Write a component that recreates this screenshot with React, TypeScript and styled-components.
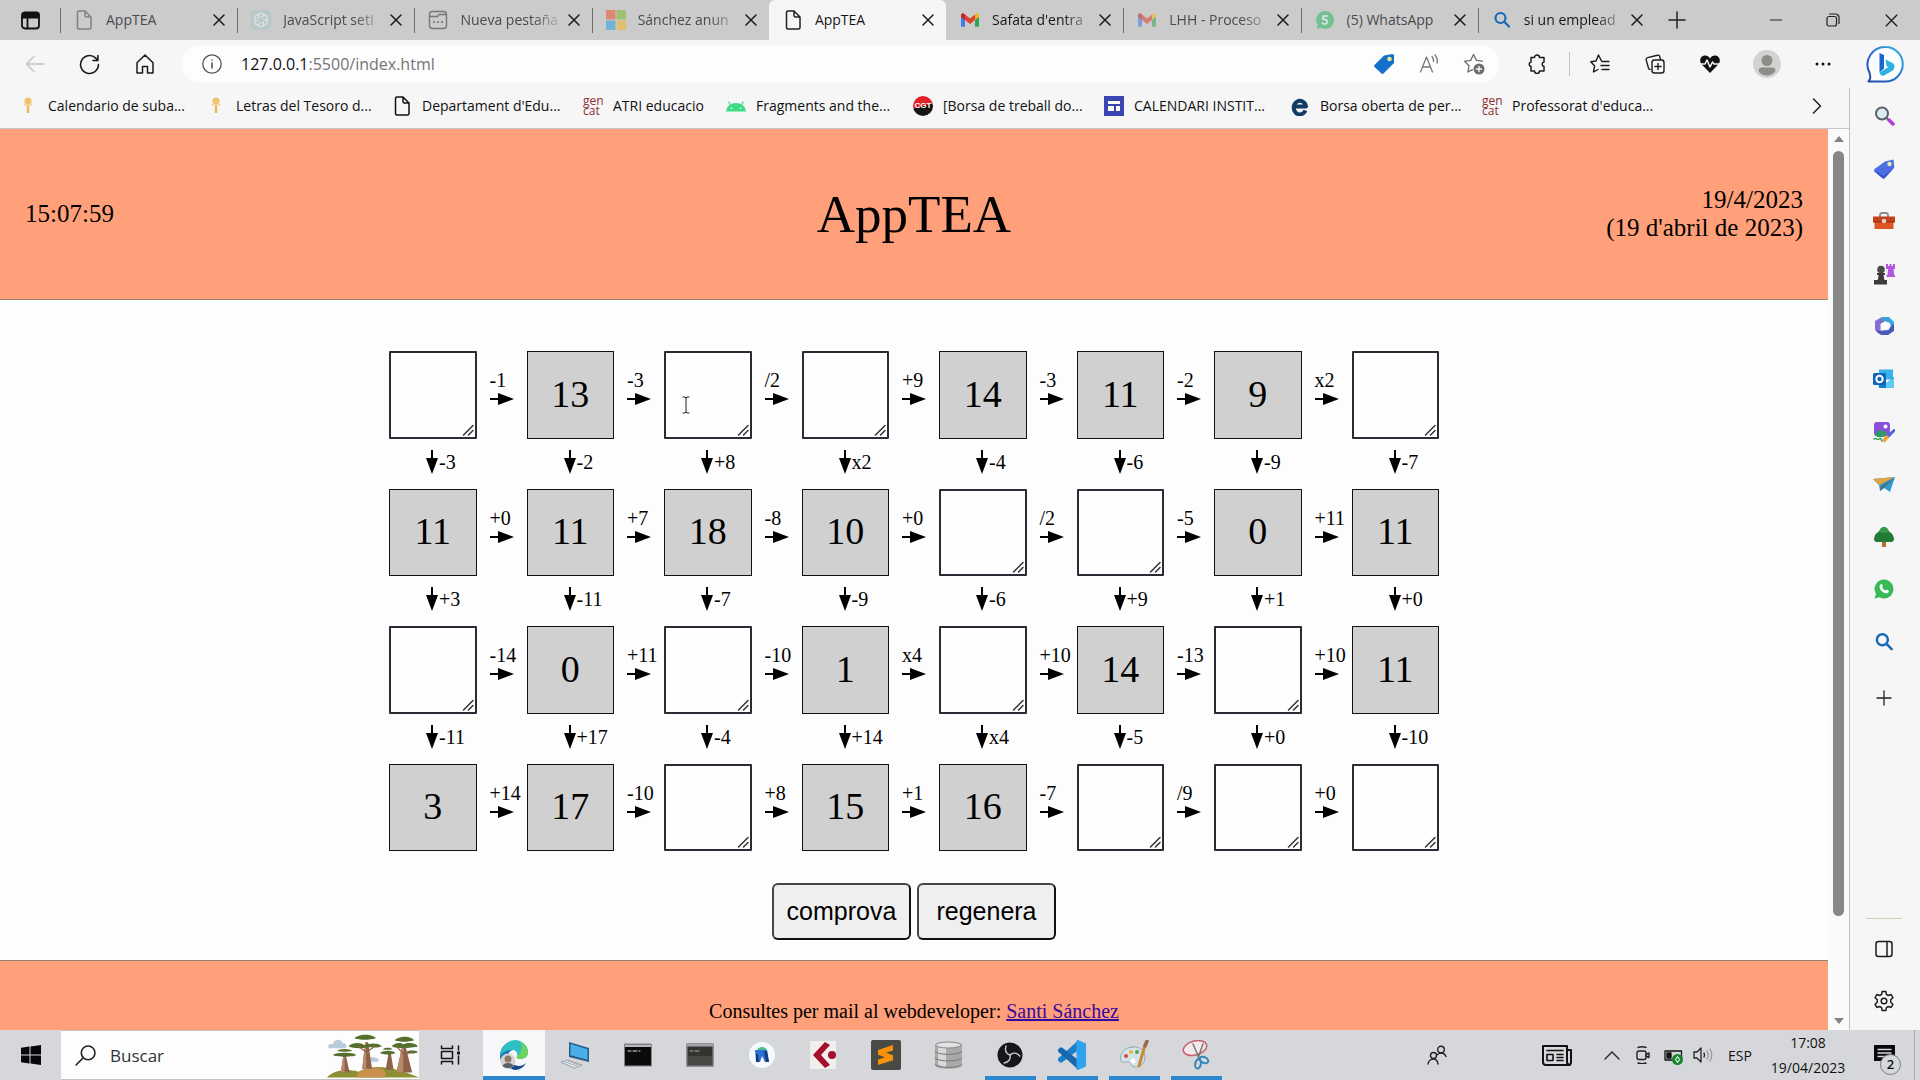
import React from "react";
import styled, { createGlobalStyle, css } from "styled-components";

const ui = `"Open Sans", "Noto Sans", sans-serif`;
const serif = `"Liberation Serif", "Times New Roman", serif`;
const arial = `"Liberation Sans", Arial, sans-serif`;

const chrome = "#f6f6f7";

const GlobalStyle = createGlobalStyle`
  *, *::before, *::after { box-sizing: border-box; }
  body { margin: 0; background: ${chrome}; color: #111; font-family: ${ui}; overflow: hidden; }
  button { font: inherit; color: inherit; }
`;

/* ---------- shared ---------- */

const Icon = styled.svg<{ $w?: number; $h?: number }>`
  display: block;
  flex: none;
  width: ${(p) => p.$w ?? 20}px;
  height: ${(p) => p.$h ?? p.$w ?? 20}px;
  fill: none;
  stroke-linecap: round;
  stroke-linejoin: round;
`;

const Plain = styled.button<{ $w?: number }>`
  display: flex;
  align-items: center;
  justify-content: center;
  flex: none;
  width: ${(p) => (p.$w ? `${p.$w}px` : "auto")};
  padding: 0;
  border: 0;
  background: none;
`;

const Window = styled.div`
  display: flex;
  flex-direction: column;
  height: 100vh;
`;

/* ---------- tab strip ---------- */

const TabStrip = styled.header`
  display: flex;
  flex: none;
  height: 40px;
  background: #cbcbcc;
`;

const TabList = styled.div`
  display: flex;
  flex: 0 1 1595px;
  min-width: 0;
`;

const Tab = styled.div<{ $active?: boolean; $edge?: boolean }>`
  display: flex;
  align-items: center;
  flex: 1 1 0;
  min-width: 0;
  padding: 0 8px 0 14px;
  ${(p) =>
    p.$active &&
    css`
      background: ${chrome};
      border-radius: 6px 6px 0 0;
    `}
  &::before {
    content: "";
    align-self: center;
    width: 1px;
    height: 25px;
    margin-left: -14px;
    margin-right: 13px;
    background: ${(p) => (p.$active || p.$edge ? "transparent" : "#6d6d70")};
  }
`;

const TabTitle = styled.button<{ $dim?: boolean; $fade?: boolean }>`
  flex: 1;
  min-width: 0;
  margin-left: 12px;
  padding: 0;
  border: 0;
  background: none;
  overflow: hidden;
  white-space: nowrap;
  text-align: left;
  font-size: 14px;
  line-height: 20px;
  color: ${(p) => (p.$dim ? "#4a4a4c" : "#161616")};
  ${(p) =>
    p.$fade &&
    css`
      mask-image: linear-gradient(to right, #000 calc(100% - 32px), transparent);
    `}
`;

const Faded = styled.span<{ $dim?: boolean }>`
  display: flex;
  justify-content: center;
  width: 20px;
  flex: none;
  opacity: ${(p) => (p.$dim ? 0.55 : 1)};
`;

const WindowButtons = styled.div`
  display: flex;
  margin-left: auto;
`;

/* ---------- toolbar ---------- */

const Body = styled.div`
  display: flex;
  flex: 1;
  min-height: 0;
`;

const Main = styled.div`
  display: flex;
  flex-direction: column;
  flex: 1;
  min-width: 0;
`;

const Toolbar = styled.div`
  display: flex;
  align-items: center;
  flex: none;
  height: 48px;
  padding-left: 7px;
`;

const AddressBar = styled.form`
  display: flex;
  align-items: center;
  flex: 1;
  min-width: 0;
  height: 38px;
  margin: 0 8px 0 10px;
  padding: 0 3px 0 20px;
  border-radius: 19px;
  background: #fdfdfe;
`;

const Url = styled.div`
  flex: 1;
  margin-left: 19px;
  display: flex;
  font-size: 16px;
  color: #737376;
`;

const Host = styled.label`
  color: #111;
`;

const UrlInput = styled.input`
  flex: 1;
  min-width: 0;
  padding: 0;
  border: 0;
  outline: 0;
  background: none;
  font: inherit;
  color: inherit;
`;

const Split = styled.span`
  width: 1px;
  height: 24px;
  margin: 0 2px;
  background: #c3c3c6;
`;

const Bookmarks = styled.nav`
  display: flex;
  align-items: center;
  flex: none;
  height: 41px;
  padding: 0 0 5px 18px;
  border-bottom: 1px solid #c4c4cc;
`;

const Bookmark = styled.a<{ $w: number }>`
  display: flex;
  align-items: center;
  gap: 10px;
  flex: 0 1 ${(p) => p.$w}px;
  min-width: 0;
  white-space: nowrap;
  font-size: 14px;
  line-height: 20px;
  color: #111;
  text-decoration: none;
`;

const MoreBookmarks = styled(Plain)`
  width: 64px;
  margin-left: auto;
`;

const Gencat = styled.span`
  flex: none;
  width: 20px;
  font-size: 12px;
  line-height: 10px;
  color: #8c2f2f;
  white-space: normal;
`;

const Cgt = styled.span`
  display: flex;
  align-items: center;
  justify-content: center;
  flex: none;
  width: 20px;
  height: 20px;
  border-radius: 50%;
  background: linear-gradient(165deg, #e2202a 50%, #161616 50%);
  color: #fff;
  font: bold 8px ${arial};
`;

/* ---------- web page ---------- */

const Viewport = styled.div`
  display: flex;
  flex: 1;
  min-height: 0;
  background: #fdfdfe;
`;

const Page = styled.div`
  flex: 1;
  min-width: 0;
  overflow: hidden;
  font-family: ${serif};
  color: #000;
`;

const PageHeader = styled.header`
  display: grid;
  grid-template-columns: 1fr auto 1fr;
  align-items: center;
  height: 171px;
  padding: 0 25px;
  background: #ffa07a;
  border-bottom: 1px solid #8f8378;
  font-size: 25px;
  line-height: 28px;
`;

const Title = styled.h1`
  margin: 0;
  font-size: 53px;
  line-height: 60px;
  font-weight: 400;
`;

const DateBlock = styled.div`
  text-align: right;
`;

const Game = styled.main`
  padding: 51px 0 20px;
`;

const Board = styled.div`
  display: grid;
  grid-template-columns: repeat(7, minmax(0, 1fr) 50px) minmax(0, 1fr);
  grid-template-rows: repeat(3, minmax(0, 1fr) 50px) minmax(0, 1fr);
  width: 1050px;
  height: 500px;
  margin: 0 auto;
`;

const Given = styled.div`
  display: flex;
  align-items: center;
  justify-content: center;
  padding-bottom: 2px;
  border: 1px solid #111;
  background: #d0d0d0;
  font-size: 38px;
  line-height: 44px;
`;

const BlankCell = styled.label`
  display: flex;
  position: relative;
`;

const Blank = styled.textarea`
  width: 100%;
  height: 100%;
  padding: 20px 4px;
  border: 2px solid #2b2b35;
  border-radius: 1px;
  outline: 0;
  resize: none;
  overflow: hidden;
  background: #fefefe;
  text-align: center;
  font: 38px/44px ${serif};
`;

const Grip = styled(Icon)`
  position: absolute;
  right: 3px;
  bottom: 3px;
  pointer-events: none;
`;

const Caret = styled(Icon)`
  position: absolute;
  left: 18px;
  top: 45px;
  pointer-events: none;
`;

const Across = styled.div`
  display: flex;
  flex-direction: column;
  gap: 2px;
  padding: 18px 0 0 13px;
  font-size: 20px;
  line-height: 22px;
`;

const Down = styled.div`
  display: flex;
  align-items: center;
  padding: 0 0 4px 37px;
  gap: 1px;
  font-size: 20px;
  line-height: 22px;
  white-space: nowrap;
`;

const Gap = styled.div``;

const Actions = styled.div`
  display: flex;
  justify-content: center;
  gap: 6px;
  margin-top: 32px;
`;

const ActionButton = styled.button`
  width: 139px;
  height: 57px;
  padding: 0;
  border: 2px solid #111;
  border-top-color: #45454a;
  border-left-color: #45454a;
  border-radius: 6px;
  background: #efeff0;
  font-family: ${arial};
  font-size: 25px;
  color: #000;
`;

const PageFooter = styled.footer`
  height: 120px;
  padding-top: 38px;
  border-top: 1px solid #8f8378;
  background: #ffa07a;
  text-align: center;
  font-size: 20px;
  line-height: 24px;
`;

const MailLink = styled.a`
  color: #3a0a9e;
`;

const ScrollTrack = styled.div`
  display: flex;
  flex-direction: column;
  align-items: center;
  flex: none;
  width: 21px;
  padding: 7px 0 6px;
  background: #fafafb;
`;

const ScrollThumb = styled.div`
  width: 11px;
  height: 765px;
  margin: 9px 0 auto;
  border-radius: 6px;
  background: #878787;
`;

/* ---------- edge sidebar ---------- */

const Sidebar = styled.aside`
  display: flex;
  flex-direction: column;
  flex: none;
  align-items: center;
  width: 71px;
`;

const BingBox = styled.div`
  display: flex;
  align-items: center;
  height: 48px;
`;

const Rail = styled.div`
  display: flex;
  flex: 1;
  flex-direction: column;
  align-items: center;
  width: 100%;
  padding: 14px 2px 0 0;
  border-left: 1px solid #bdbdc4;
`;

const RailApps = styled.div`
  display: flex;
  flex-direction: column;
  justify-content: space-between;
  height: 554px;
  margin-bottom: 28px;
`;

const RailButton = styled(Plain)`
  height: 28px;
`;

const RailBottom = styled.div`
  display: flex;
  flex-direction: column;
  align-items: center;
  gap: 24px;
  margin-top: auto;
  padding: 16px 0 15px;
  width: 36px;
  border-top: 1px solid #cdcdb8;
`;

/* ---------- taskbar ---------- */

const Taskbar = styled.footer`
  display: flex;
  align-items: stretch;
  flex: none;
  height: 50px;
  background: #d6d7da;
`;

const SearchBox = styled.label`
  display: flex;
  align-items: center;
  gap: 14px;
  width: 358px;
  padding-left: 14px;
  border-top: 1px solid #c4c4c8;
  border-bottom: 1px solid #c4c4c8;
  background: #fdfdfe;
`;

const SearchInput = styled.input`
  flex: 1;
  min-width: 0;
  padding: 0;
  border: 0;
  outline: 0;
  background: none;
  font: 17px ${ui};
  color: #333;
  &::placeholder { color: #333; opacity: 1; }
`;

const Task = styled(Plain)<{ $open?: boolean; $active?: boolean }>`
  width: 62px;
  border-top: 4px solid transparent;
  border-bottom: 4px solid transparent;
  ${(p) =>
    p.$open &&
    css`
      background: linear-gradient(#2b88cf, #2b88cf) bottom center / 51px 4px no-repeat border-box;
    `}
  ${(p) =>
    p.$active &&
    css`
      background: #f6f7f9;
      border-top-color: #f6f7f9;
      border-bottom-color: #2b88cf;
    `}
`;

const TaskView = styled(Plain)`
  width: 64px;
`;

const Tray = styled.div`
  display: flex;
  align-items: center;
  margin-left: auto;
  font-size: 14px;
  line-height: 25px;
`;

const Clock = styled.div`
  width: 92px;
  text-align: center;
`;

const Notice = styled(Plain)`
  position: relative;
  height: 50px;
`;

const Count = styled.span`
  position: absolute;
  left: 26px;
  top: 24px;
  width: 21px;
  height: 21px;
  border: 1px solid #77777a;
  border-radius: 50%;
  background: #d6d7da;
  font-size: 13px;
  line-height: 19px;
  text-align: center;
  font-weight: 600;
`;

const DesktopEdge = styled.span`
  width: 6px;
  height: 50px;
  border-left: 1px solid #a9a9ae;
`;

/* ---------- drawings ---------- */

const PageIcon = ({ c = "#222" }: { c?: string }) => (
  <Icon viewBox="0 0 20 20" stroke={c} strokeWidth="1.5">
    <path d="M3.5 2.5a1.5 1.5 0 0 1 1.5-1.5H11l6 6v10.500a1.500 1.500 0 0 1-1.500 1.500H5a1.500 1.500 0 0 1-1.500-1.500zM11 1v4.500A1.500 1.500 0 0 0 12.500 7H17" />
  </Icon>
);
const CloseX = ({ s = 12, w = 1.5 }: { s?: number; w?: number }) => (
  <Icon $w={s} viewBox="0 0 12 12" stroke="#1b1b1b" strokeWidth={w}>
    <path d="M1 1l10 10M11 1L1 11" />
  </Icon>
);
const GptIcon = () => (
  <Icon viewBox="0 0 20 20">
    <rect width="20" height="20" rx="5" fill="#a9c4c8" />
    <g stroke="#eef7f6" strokeWidth="1.2">
      {[0, 60, 120, 180, 240, 300].map((a) => (
        <path key={a} transform={`rotate(${a} 10 10)`} d="M7.500 8.500V5.500a2.600 2.600 0 0 1 4.500-1.500l2.500 1.600" />
      ))}
    </g>
  </Icon>
);
const NewTabIcon = () => (
  <Icon viewBox="0 0 20 20" stroke="#333" strokeWidth="1.4">
    <rect x="1.5" y="1.5" width="17" height="17" rx="3" />
    <path d="M1.500 6.500h8l1.500-2h7" />
    <path d="M6 12h.1M10 12h.1M14 12h.1" strokeWidth="2" />
  </Icon>
);
const MsIcon = () => (
  <Icon viewBox="0 0 20 20">
    <path fill="#f0502f" d="M0 0h9.500v9.500H0z" />
    <path fill="#7db82a" d="M10.500 0H20v9.500h-9.500z" />
    <path fill="#2ba0e0" d="M0 10.500h9.500V20H0z" />
    <path fill="#f9b524" d="M10.500 10.500H20V20h-9.500z" />
  </Icon>
);
const GmailIcon = () => (
  <Icon viewBox="0 0 20 20">
    <path fill="#3f7de8" d="M1 5v10.500c0 .8.600 1.300 1.300 1.300H5V8z" />
    <path fill="#2fa552" d="M19 5v10.500c0 .8-.6 1.300-1.300 1.300H15V8z" />
    <path fill="#e0402f" d="M5 4.500l5 4 5-4V10l-5 4-5-4z" />
    <path fill="#b92b26" d="M1 5.200C1 3.300 3 2.700 4.300 3.700L5 4.200V10L1 7z" />
    <path fill="#f4b71b" d="M19 5.200c0-1.900-2-2.500-3.300-1.500l-.7.5V10l4-3z" />
  </Icon>
);
const WaTabIcon = () => (
  <Icon viewBox="0 0 20 20">
    <path fill="#2db865" d="M10 1a9 9 0 1 1-4.500 16.800L1.500 19l1.200-4A9 9 0 0 1 10 1z" />
    <path stroke="#fff" strokeWidth="1.6" d="M12.500 6H8v3.500c5-1 5.500 4.500 1.800 4.500-1 0-1.800-.3-2.300-.8" />
  </Icon>
);
const BingSearchIcon = ({ s = 20 }: { s?: number }) => (
  <Icon $w={s} viewBox="0 0 20 20" stroke="#1769b5" strokeWidth="2.2">
    <circle cx="8.5" cy="8" r="5" />
    <path d="M12.300 11.800L17 16.500" />
  </Icon>
);
const Coin = () => (
  <Icon viewBox="0 0 20 20">
    <circle cx="10" cy="5" r="3.600" fill="#f1c36b" />
    <path stroke="#eab765" strokeWidth="2.5" d="M10 6v11" strokeLinecap="butt" />
    <path stroke="#f3d298" strokeWidth="2" d="M6.500 8.500h7" />
  </Icon>
);
const Android = () => (
  <Icon viewBox="0 0 20 20">
    <path fill="#3ddc84" d="M0 15.500a10 8.500 0 0 1 20 0z" />
    <path stroke="#3ddc84" strokeWidth="1.2" d="M4.500 9L2.800 6M15.500 9l1.700-3" />
    <circle cx="5.5" cy="12.300" r=".8" fill="#fff" />
    <circle cx="14.5" cy="12.300" r=".8" fill="#fff" />
  </Icon>
);
const Sites = () => (
  <Icon viewBox="0 0 20 20">
    <path fill="#3b44b3" d="M0 0h20v20H0z" />
    <path fill="#fff" d="M4 5h12v3H4zM4 10h6v5H4zM12 10h4v5h-4z" />
  </Icon>
);
const BlueE = () => (
  <Icon viewBox="0 0 20 20" stroke="#123b66" strokeWidth="4">
    <path d="M4 10.500h12A6.200 6.800 0 1 0 15.500 14.500" strokeLinecap="butt" />
  </Icon>
);

const BingLogo = () => (
  <Icon $w={38} viewBox="0 0 38 38">
    <defs>
      <linearGradient id="bing" x1="0" y1="1" x2="1" y2="0">
        <stop offset="0" stopColor="#2646a8" />
        <stop offset=".6" stopColor="#2b80d8" />
        <stop offset="1" stopColor="#35b9dc" />
      </linearGradient>
    </defs>
    <path d="M19.500 2a17 17 0 1 1 0 34.500H2.500c2.500-3 2-5 1-9A17.500 17.500 0 0 1 19.500 2z" fill="#fbfdff" stroke="url(#bing)" strokeWidth="2" />
    <path fill="#1b67d2" d="M13.500 8l4.500 2v13.500l-4.500 4z" />
    <path fill="#2fb0e2" d="M19.500 14.500l7 3.500c3 2 2.500 6-.5 8L18 30.500c-2 1-4-.5-4.500-3l9-5.500-2-1z" />
  </Icon>
);

const railIcons: [string, React.ReactNode][] = [
  ["Buscar", (
    <>
      <circle cx="9" cy="8.5" r="6" fill="#d9e9f5" stroke="#5d6066" strokeWidth="2" />
      <path d="M13.500 13l2 2" stroke="#5d6066" strokeWidth="2" />
      <path d="M16 15l4 4" stroke="#b13fd0" strokeWidth="3.5" />
    </>
  )],
  ["Compras", (
    <>
      <path fill="#4c6fe6" d="M12 3.500l8.500-2 .8 8-9.500 10.500a2 2 0 0 1-2.500 0L1.500 13.500a2 2 0 0 1 0-2.500z" />
      <path fill="#3451c8" d="M1 12.500l9.500 5.500L21.300 9.500 11.800 20a2 2 0 0 1-2.500 0L1.500 13.500z" />
      <circle cx="16.5" cy="6" r="2.2" fill="#f1e7a2" />
    </>
  )],
  ["Herramientas", (
    <>
      <path d="M7 7V5a2 2 0 0 1 2-2h4a2 2 0 0 1 2 2v2" stroke="#8b8b8b" strokeWidth="1.8" />
      <path fill="#c3421c" d="M0 6.500h22V12H0z" />
      <path fill="#dd5524" d="M1.500 12h19v7h-19z" />
      <path fill="#a83413" d="M0 11h22v1.500H0z" />
      <circle cx="11" cy="11" r="2.3" fill="#e6cfc0" />
    </>
  )],
  ["Juegos", (
    <>
      <path fill="#b258e0" d="M13 1h2v2h1.500V1h2v2H20V1h2v5h-1.500l.7 6H22v2h-8.500v-2h1l.6-6H13z" />
      <circle cx="8" cy="6.5" r="3.8" fill="#4c4c4a" />
      <path fill="#3b3b39" d="M4 10h8v2h-1.500l.9 5H14v4.500H1V17h3.700l1-5H4z" />
    </>
  )],
  ["Microsoft 365", (
    <>
      <path fill="#7e6fd0" d="M9 2L2 6v9l4 4 1.500-2V9l6-3.500z" />
      <path fill="#36a3d9" d="M9 2h7l5 5v6l-3-1-1-4-8-3z" />
      <path fill="#4b59b8" d="M21 9v7l-6 4H8l-5-4 7-.5 5.500-.5 2.500-4z" />
      <path fill="#fdfdff" d="M8.500 8.500l3-1.700 3.500 2v4l-3.500 2-3-2z" />
    </>
  )],
  ["Outlook", (
    <>
      <path fill="#35b3ea" d="M6 1.500h14v10H6z" />
      <path fill="#1680cf" d="M5 11l9 4 7-6v11H6z" />
      <path fill="#5dcbf4" d="M13 15l8-5v10h-8z" />
      <rect x="0" y="5" width="13" height="12" rx="1.5" fill="#0f66b7" />
      <circle cx="6.5" cy="11" r="3.2" stroke="#fff" strokeWidth="2" />
    </>
  )],
  ["Drop", (
    <>
      <rect x="1" y="1" width="16" height="14" rx="3" fill="#8750d8" />
      <circle cx="12.5" cy="5.5" r="2" fill="#fff" />
      <path fill="#2d9b62" d="M2 14c3-6 8-6 12-2l-3 4H4z" />
      <path d="M1 18c2-2 3 2 5 0s2 1 3 2" stroke="#2d9b62" strokeWidth="1.5" />
      <path d="M21 9.500l-6 6" stroke="#5161d8" strokeWidth="3" />
      <path d="M14 16l-3 3.500" stroke="#f0a23a" strokeWidth="3.5" />
    </>
  )],
  ["Enviar", (
    <>
      <path fill="#2f9bd2" d="M0 6l22-2-5 15-6-4-4 3-1-6z" />
      <path fill="#e4a43c" d="M0 6l22-2L6 12z" />
      <path fill="#4a7184" d="M22 4L8 13l-1 5 4-3z" />
    </>
  )],
  ["Árbol", (
    <>
      <path fill="#b3702a" d="M9 15h4v6H9z" />
      <path fill="#237a35" d="M11 1c2 0 4 2 5 4.500 3 1.500 4 3.500 4.500 5.500 1.500 3-.5 5-3 5h-13c-2.500 0-4.500-2-3-5C2 9 3 7 6 5.500 7 3 9 1 11 1z" />
      <path fill="#38994a" d="M11 1c2 0 4 2 5 4.500-2 2-7 2-10 0C7 3 9 1 11 1z" />
    </>
  )],
  ["WhatsApp", (
    <>
      <path fill="#38bb57" d="M11 1.500a9.500 9.500 0 1 1-4.700 17.800L1.500 20.500 3 16A9.500 9.500 0 0 1 11 1.500z" />
      <path fill="#fff" d="M7.500 6.500c1-.8 1.700-.3 2 .8.400 1.200.4 1.500-.3 2.300.7 1.400 1.700 2.300 3.200 2.900.8-.8 1.100-1 2.100-.5 1.300.7 1.700 1 1.200 2-1.200 2-3.700 1.500-6-.1C7 12 5.500 8.500 7.500 6.500z" />
    </>
  )],
];

const Rocks = () => (
  <Icon $w={92} $h={46} viewBox="0 0 94 46">
    <path fill="#b9ccd9" d="M2 16c-2-3 1-5 4-4 1-6 9-6 10-1 4-1 5 4 3 5zM43 28c0-3 4-4 6-2 3-1 5 3 3 4h-8z" />
    <path fill="#8b9133" d="M0 46c8-8 20-9 32-6 16-8 34-6 62 6z" />
    <path fill="#c98f4d" d="M30 46c0-5 6-10 18-10 12 0 13 6 11 10z" />
    <path fill="#8f6148" d="M14 41l3-19h2l4 19zM36 37l3-27h3l4 27zM60 38l3-18h2l3 18zM71 41l6-28h3l7 28z" />
    <path fill="#b98a68" d="M14 41l3-19h1v19zM36 37l3-27h1v27zM71 41l6-28h1v28z" />
    <g fill="#55702d">
      <path d="M6 23c4-3 20-3 24 0-3 2-8 1-12 2-4-1-9 0-12-2zM10 19c3-3 13-3 16 0-5 1-11 1-16 0z" />
      <path d="M22 14c4-4 13-4 16-1 5-2 14-3 18 1-4 2-9 1-13 1-7 1-15 2-21-1zM28 6c4-5 19-5 22 0-7 2-16 2-22 0z" />
      <path d="M54 21c4-3 13-3 16 0-4 2-12 2-16 0zM57 17c3-2 7-2 10 0-3 1-7 1-10 0z" />
      <path d="M66 14c4-4 9-4 12-2 4-2 12-2 15 2-6 2-22 3-27 0zM69 8c4-5 17-5 20 0-6 2-14 2-20 0zM81 20c3-2 9-2 12 0-3 2-9 2-12 0z" />
    </g>
    <path d="M40 20l-8-6M42 19l7-5M78 22l-7-8M80 22l7-2" stroke="#8f6148" strokeWidth="1.2" />
  </Icon>
);

const EdgeLogo = () => (
  <Icon $w={32} $h={32} viewBox="0 0 32 32">
    <path fill="#1877c0" d="M2 17C2 8 9 2 17 2c4 2 3 9-1 9-5 0-7 5-5 10 1 4 5 7 9 8-9 3-18-3-18-12z" />
    <path fill="#2cc0c4" d="M3 12C6 5 11 1 18 1c7 1 12 6 12 12 0 5-4 7-8 7-3 0-4-1-3-3 1-3-1-6-5-6-5 0-9 2-12 6z" />
    <path fill="#6bd45d" d="M22 3c5 2 8 6 8 10 0 5-4 7-8 7-3 0-4-1-3-3 5-3 6-9 3-14z" />
    <path fill="#124a8d" d="M14 24c4 4 10 4 14 0-2 4-6 7-11 7-4 0-6-4-3-7z" />
    <circle cx="10" cy="22" r="7.5" fill="#d7d3cc" />
    <circle cx="10" cy="20" r="3.5" fill="#8b7a6a" />
    <path fill="#5a5f68" d="M4.500 27c1-4 10-4 11 0-3 3-8 3-11 0z" />
  </Icon>
);

/* ---------- data ---------- */

const tabs: { t: string; icon: React.ReactNode; dim?: boolean; fade?: boolean; active?: boolean; edge?: boolean }[] = [
  { t: "AppTEA", icon: <PageIcon c="#444" />, dim: true },
  { t: "JavaScript setI", icon: <GptIcon />, dim: true, fade: true },
  { t: "Nueva pestaña", icon: <NewTabIcon />, dim: true, fade: true },
  { t: "Sánchez anun", icon: <MsIcon />, dim: true, fade: true },
  { t: "AppTEA", icon: <PageIcon />, active: true },
  { t: "Safata d'entra", icon: <GmailIcon />, fade: true, edge: true },
  { t: "LHH - Proceso", icon: <GmailIcon />, dim: true, fade: true },
  { t: "(5) WhatsApp", icon: <WaTabIcon />, dim: true },
  { t: "si un emplead", icon: <BingSearchIcon />, fade: true },
];

const bookmarks: [string, React.ReactNode, number][] = [
  ["Calendario de suba...", <Coin />, 188],
  ["Letras del Tesoro d...", <Coin />, 186],
  ["Departament d'Edu...", <PageIcon c="#111" />, 191],
  ["ATRI educacio", <Gencat>gen cat</Gencat>, 143],
  ["Fragments and the...", <Android />, 187],
  ["[Borsa de treball do...", <Cgt>CGT</Cgt>, 191],
  ["CALENDARI INSTIT...", <Sites />, 186],
  ["Borsa oberta de per...", <BlueE />, 192],
  ["Professorat d'educa...", <Gencat>gen cat</Gencat>, 190],
];

const rows = [
  ["", "-1", "13", "-3", "", "/2", "", "+9", "14", "-3", "11", "-2", "9", "x2", ""],
  ["11", "+0", "11", "+7", "18", "-8", "10", "+0", "", "/2", "", "-5", "0", "+11", "11"],
  ["", "-14", "0", "+11", "", "-10", "1", "x4", "", "+10", "14", "-13", "", "+10", "11"],
  ["3", "+14", "17", "-10", "", "+8", "15", "+1", "16", "-7", "", "/9", "", "+0", ""],
];
const downs = [
  ["-3", "-2", "+8", "x2", "-4", "-6", "-9", "-7"],
  ["+3", "-11", "-7", "-9", "-6", "+9", "+1", "+0"],
  ["-11", "+17", "-4", "+14", "x4", "-5", "+0", "-10"],
];

const RightArrow = () => (
  <Icon $w={24} $h={12} viewBox="0 0 24 12">
    <path fill="#000" d="M0 5h8V0l16 6-16 6V7H0z" />
  </Icon>
);
const DownArrow = () => (
  <Icon $w={12} $h={24} viewBox="0 0 12 24">
    <path fill="#000" d="M5 0v8H0l6 16 6-16H7V0z" />
  </Icon>
);

function PlayBoard() {
  return (
    <Board>
      {rows.map((row, r) => (
        <React.Fragment key={r}>
          {row.map((v, c) =>
            c % 2 ? (
              <Across key={c}>
                {v}
                <RightArrow />
              </Across>
            ) : v ? (
              <Given key={c}>{v}</Given>
            ) : (
              <BlankCell key={c}>
                <Blank rows={1} aria-label={`Fila ${r + 1}, columna ${c / 2 + 1}`} />
                <Grip $w={12} viewBox="0 0 12 12" stroke="#333" strokeWidth="1.5">
                  <path d="M1.500 11L11 1.500M6.500 11L11 6.500" />
                </Grip>
                {r === 0 && c === 4 && (
                  <Caret $w={8} $h={18} viewBox="0 0 8 18" stroke="#222" strokeWidth="1">
                    <path d="M1 1h2l1 1 1-1h2M4 2v14M1 17h2l1-1 1 1h2" />
                  </Caret>
                )}
              </BlankCell>
            ),
          )}
          {r < 3 &&
            downs[r].map((d, i) => (
              <React.Fragment key={i}>
                <Down>
                  <DownArrow />
                  {d}
                </Down>
                {i < 7 && <Gap />}
              </React.Fragment>
            ))}
        </React.Fragment>
      ))}
    </Board>
  );
}

export default function App() {
  return (
    <Window>
      <GlobalStyle />
      <TabStrip>
        <Plain $w={60} aria-label="Menú de pestañas">
          <Icon $w={19} viewBox="0 0 19 19" stroke="#111" strokeWidth="1.8">
            <rect x="1" y="1.5" width="17" height="16" rx="3" />
            <path d="M1.500 2.500h16v4h-16z" fill="#111" />
            <path d="M6.500 6v11" />
          </Icon>
        </Plain>
        <TabList>
          {tabs.map((t, i) => (
            <Tab key={i} $active={t.active} $edge={t.edge}>
              <Faded $dim={t.dim}>{t.icon}</Faded>
              <TabTitle $dim={t.dim} $fade={t.fade}>{t.t}</TabTitle>
              <Plain $w={20} aria-label="Cerrar pestaña"><CloseX /></Plain>
            </Tab>
          ))}
        </TabList>
        <Plain $w={44} aria-label="Nueva pestaña">
          <Icon $w={18} viewBox="0 0 18 18" stroke="#222" strokeWidth="1.5"><path d="M9 1v16M1 9h16" /></Icon>
        </Plain>
        <WindowButtons>
          <Plain $w={57} aria-label="Minimizar">
            <Icon $w={12} viewBox="0 0 12 12" stroke="#222" strokeWidth="1.2"><path d="M0 6h12" /></Icon>
          </Plain>
          <Plain $w={58} aria-label="Restaurar">
            <Icon $w={14} viewBox="0 0 14 14" stroke="#222" strokeWidth="1.2">
              <rect x="1" y="3.5" width="9.5" height="9.5" rx="2" />
              <path d="M3.500 1h6A3.500 3.500 0 0 1 13 4.500v6" />
            </Icon>
          </Plain>
          <Plain $w={58} aria-label="Cerrar"><CloseX s={13} w={1.2} /></Plain>
        </WindowButtons>
      </TabStrip>

      <Body>
        <Main>
          <Toolbar>
            <Plain $w={55} aria-label="Atrás">
              <Icon viewBox="0 0 20 20" stroke="#c4c4c6" strokeWidth="1.5"><path d="M19 10H1.500M9 2.500L1.500 10 9 17.500" /></Icon>
            </Plain>
            <Plain $w={55} aria-label="Actualizar">
              <Icon $w={21} viewBox="0 0 20 20" stroke="#1b1b1b" strokeWidth="1.5">
                <path d="M18.500 10a8.500 8.500 0 1 1-2.800-6.300l2 2M18 1.500v4.700h-4.700" />
              </Icon>
            </Plain>
            <Plain $w={55} aria-label="Inicio">
              <Icon viewBox="0 0 20 20" stroke="#1b1b1b" strokeWidth="1.5">
                <path d="M2 8.800L10 1l8 7.800V19h-5.500v-6.500h-5V19H2z" />
              </Icon>
            </Plain>
            <AddressBar onSubmit={(e) => e.preventDefault()}>
              <Icon viewBox="0 0 20 20" stroke="#555" strokeWidth="1.3">
                <circle cx="10" cy="10" r="9.2" />
                <path d="M10 9v5M10 6v.1" strokeWidth="1.6" />
              </Icon>
              <Url>
                <Host htmlFor="url">127.0.0.1</Host>
                <UrlInput id="url" defaultValue=":5500/index.html" />
              </Url>
              <Plain $w={45} aria-label="Cupones">
                <Icon viewBox="0 0 20 20">
                  <path fill="#1570cc" d="M10 1.500L18.500 0l1.500 1v8L9.500 19.500a1.500 1.500 0 0 1-2 0L.5 13a1.500 1.500 0 0 1 0-2z" />
                  <circle cx="15.5" cy="5" r="2.3" fill="#f2e28a" />
                </Icon>
              </Plain>
              <Plain $w={45} aria-label="Leer en voz alta">
                <Icon viewBox="0 0 20 20" stroke="#77777a" strokeWidth="1.3">
                  <path d="M1.500 18L7.500 3l6 15M3.500 13h8M13 2.500a6 6 0 0 1 1.500 5M16 1a9 9 0 0 1 2 8" />
                </Icon>
              </Plain>
              <Plain $w={45} aria-label="Añadir a favoritos">
                <Icon $w={22} viewBox="0 0 22 22" stroke="#6d6d70" strokeWidth="1.3">
                  <path d="M19.500 8.200l-6-.8L10.500 1.500 7.700 7.400l-6.200.9 4.500 4.400-1.100 6.300 4.500-2.400" />
                  <circle cx="16" cy="16" r="5.5" fill="#6d6d70" stroke="none" />
                  <path d="M16 13.500v5M13.500 16h5" stroke="#fff" />
                </Icon>
              </Plain>
            </AddressBar>
            <Plain $w={60} aria-label="Extensiones">
              <Icon viewBox="0 0 20 20" stroke="#1b1b1b" strokeWidth="1.5">
                <path d="M4 3.500h3.500a2.500 2.500 0 0 1 5 0H17V8a2.300 2.300 0 0 0 0 4.500V17h-4.500a2.500 2.500 0 0 1-5 0H4v-4.500A2.300 2.300 0 0 1 4 8z" />
              </Icon>
            </Plain>
            <Split />
            <Plain $w={55} aria-label="Favoritos">
              <Icon viewBox="0 0 20 20" stroke="#1b1b1b" strokeWidth="1.4">
                <path d="M11.500 7L8.500 1 6 7 .8 7.800 4.600 12l-1.100 6 4.500-2.500M12 7.500h7M11 11.500h8M12 15.500h7" />
              </Icon>
            </Plain>
            <Plain $w={55} aria-label="Colecciones">
              <Icon viewBox="0 0 20 20" stroke="#1b1b1b" strokeWidth="1.4">
                <rect x="7" y="6" width="12" height="13" rx="2.5" />
                <path d="M13 9.500v6M10 12.500h6M15.500 5.500l-.7-2.800a2 2 0 0 0-2.500-1.500L2.700 3.600a2 2 0 0 0-1.500 2.500L3.500 14c.3.800.8 1.200 1.500 1.500" />
              </Icon>
            </Plain>
            <Plain $w={55} aria-label="Rendimiento">
              <Icon viewBox="0 0 20 20">
                <path fill="#111" d="M10 19L1.500 10.200C-1.500 6 1 1.500 5 1.500c2.200 0 4 1.200 5 3 1-1.800 2.800-3 5-3 4 0 6.500 4.500 3.500 8.700z" />
                <path d="M1 10h4l2-4 3 7 2.500-5 1.500 2h5" stroke={chrome} strokeWidth="1.5" />
              </Icon>
            </Plain>
            <Plain $w={60} aria-label="Perfil">
              <Icon $w={28} viewBox="0 0 28 28">
                <circle cx="14" cy="14" r="14" fill="#d2d2d0" />
                <circle cx="14" cy="10.5" r="5.5" fill="#8d8d89" />
                <path fill="#8d8d89" d="M5.500 20a3 3 0 0 1 3-2.500h11a3 3 0 0 1 3 2.500c-1 4-5 5.500-8.500 5.500S6.500 24 5.500 20z" />
              </Icon>
            </Plain>
            <Plain $w={52} aria-label="Configuración y más">
              <Icon viewBox="0 0 20 20">
                <g fill="#111">
                  <circle cx="4" cy="10" r="1.5" />
                  <circle cx="10" cy="10" r="1.5" />
                  <circle cx="16" cy="10" r="1.5" />
                </g>
              </Icon>
            </Plain>
          </Toolbar>
          <Bookmarks>
            {bookmarks.map(([t, icon, w]) => (
              <Bookmark key={t} href="#" $w={w}>{icon}{t}</Bookmark>
            ))}
            <MoreBookmarks aria-label="Más favoritos">
              <Icon $w={16} viewBox="0 0 16 16" stroke="#222" strokeWidth="1.5"><path d="M4.500 1l7 7-7 7" /></Icon>
            </MoreBookmarks>
          </Bookmarks>

          <Viewport>
            <Page>
              <PageHeader>
                <div>15:07:59</div>
                <Title>AppTEA</Title>
                <DateBlock>19/4/2023<br />(19 d'abril de 2023)</DateBlock>
              </PageHeader>
              <Game>
                <PlayBoard />
                <Actions>
                  <ActionButton>comprova</ActionButton>
                  <ActionButton>regenera</ActionButton>
                </Actions>
              </Game>
              <PageFooter>
                Consultes per mail al webdeveloper: <MailLink href="#">Santi Sánchez</MailLink>
              </PageFooter>
            </Page>
            <ScrollTrack>
              <Icon $w={10} $h={6} viewBox="0 0 10 6"><path fill="#858585" d="M0 6l5-6 5 6z" /></Icon>
              <ScrollThumb />
              <Icon $w={10} $h={6} viewBox="0 0 10 6"><path fill="#858585" d="M0 0l5 6 5-6z" /></Icon>
            </ScrollTrack>
          </Viewport>
        </Main>

        <Sidebar>
          <BingBox>
            <Plain aria-label="Bing"><BingLogo /></Plain>
          </BingBox>
          <Rail>
            <RailApps>
              {railIcons.map(([name, art]) => (
                <RailButton key={name} aria-label={name}>
                  <Icon $w={22} viewBox="0 0 22 22">{art}</Icon>
                </RailButton>
              ))}
              <RailButton aria-label="Búsqueda"><BingSearchIcon s={22} /></RailButton>
            </RailApps>
            <RailButton aria-label="Añadir">
              <Icon $w={16} viewBox="0 0 16 16" stroke="#222" strokeWidth="1.3"><path d="M8 1v14M1 8h14" /></Icon>
            </RailButton>
            <RailBottom>
              <RailButton aria-label="Ocultar barra lateral">
                <Icon $w={18} viewBox="0 0 18 18" stroke="#1b1b1b" strokeWidth="1.5">
                  <rect x="1" y="1.5" width="16" height="15" rx="2.5" /><path d="M12 2v14" />
                </Icon>
              </RailButton>
              <RailButton aria-label="Configuración">
                <Icon $w={22} viewBox="0 0 22 22" stroke="#1b1b1b" strokeWidth="1.5">
                  <path d="M9.200 1.500h3.600l.6 2.900 1.900 1.100 2.800-1 1.800 3.200-2.200 2v2.600l2.200 2-1.800 3.200-2.800-1-1.900 1.100-.6 2.900H9.200l-.6-2.900-1.900-1.100-2.800 1-1.800-3.200 2.200-2V9.700l-2.200-2 1.800-3.200 2.800 1 1.900-1.100z" />
                  <circle cx="11" cy="11" r="2.8" />
                </Icon>
              </RailButton>
            </RailBottom>
          </Rail>
        </Sidebar>
      </Body>

      <Taskbar>
        <Plain $w={61} aria-label="Inicio de Windows">
          <Icon viewBox="0 0 20 20">
            <path fill="#06060f" d="M0 2.800L8.500 1.600v8H0zM9.500 1.500L20 0v9.600H9.500zM0 10.500h8.500v8L0 17.300zM9.500 10.500H20V20L9.500 18.600z" />
          </Icon>
        </Plain>
        <SearchBox>
          <Icon $w={21} viewBox="0 0 20 20" stroke="#222" strokeWidth="1.5"><circle cx="12.5" cy="7.5" r="6.5" /><path d="M8 12L1 19" /></Icon>
          <SearchInput placeholder="Buscar" aria-label="Buscar" />
          <Rocks />
        </SearchBox>
        <TaskView aria-label="Vista de tareas">
          <Icon $w={22} $h={20} viewBox="0 0 22 20" stroke="#14141c" strokeWidth="1.5">
            <path d="M1.500 1v2.500h11V1M1.500 6.500h11v7h-11zM1.500 19v-2.500h11V19M18.500 1v4M18.500 11v8" />
            <path d="M17 6.500h3v3h-3z" fill="#14141c" stroke="none" />
          </Icon>
        </TaskView>
        <Task $active aria-label="Edge"><EdgeLogo /></Task>
        <Task aria-label="Equipo">
          <Icon $w={30} $h={28} viewBox="0 0 30 28">
            <path fill="#2b5a86" d="M8 1l20 6v14L8 16z" /><path fill="#4aaeea" d="M9.500 3l17 5.200v10.600l-17-4.500z" />
            <path fill="#e6e9ec" stroke="#8c9299" strokeWidth=".8" d="M0 21l7-2 14 5-7 3z" /><path d="M4 21l12 4M7 20l11 4" stroke="#9aa1a8" strokeWidth=".8" />
          </Icon>
        </Task>
        <Task aria-label="Símbolo del sistema">
          <Icon $w={28} $h={24} viewBox="0 0 28 24">
            <path fill="#0b0b0b" stroke="#8a8a8a" strokeWidth="1" d="M.5 1h27v22H.5z" /><path fill="#b9b9bb" d="M1 1.500h26V4H1z" />
            <path d="M4 8h3M9 8h4M15 8h1" stroke="#ddd" />
          </Icon>
        </Task>
        <Task aria-label="Terminal">
          <Icon $w={28} $h={24} viewBox="0 0 28 24">
            <path fill="#33342f" stroke="#77777a" strokeWidth="1.5" d="M1 1h26v22H1z" /><path fill="#a5a7ab" d="M1 1h26v2.500H1z" />
            <path d="M4 8h3M9 8h4" stroke="#aaa" /><path fill="#484944" d="M2 13h24v9H2z" />
          </Icon>
        </Task>
        <Task aria-label="Android Studio">
          <Icon $w={26} viewBox="0 0 26 26">
            <circle cx="13" cy="13" r="13" fill="#f6f9fb" /><path fill="#4bc08a" d="M8 9a5 4 0 0 1 10 0z" />
            <path fill="#2d6fd8" d="M6 8h12l2 12h-4l-3-6-2 6H7z" /><path fill="#173d75" d="M15 9h3l2 11h-3zM7 12h2l1 8H7z" />
          </Icon>
        </Task>
        <Task aria-label="Red Gate">
          <Icon $w={28} viewBox="0 0 28 28">
            <path fill="#f2eeee" d="M0 0h26v28H0z" /><path fill="#a50f2c" d="M15 1l5 3-9 10 9 10-5 3L3 14z" /><circle cx="22" cy="14" r="4" fill="#a50f2c" />
          </Icon>
        </Task>
        <Task aria-label="Sublime Text">
          <Icon $w={30} viewBox="0 0 30 30">
            <rect width="30" height="30" rx="2" fill="#484a45" />
            <path fill="#f99209" d="M7 10l15-5v5.500l-7 2.300 7 2.400v5L7 25v-5.500l7-2.200-7-2.500z" />
          </Icon>
        </Task>
        <Task aria-label="Base de datos">
          <Icon $w={29} $h={28} viewBox="0 0 29 28">
            <path fill="#a9a9a9" d="M1 4c0-4 27-4 27 0v20c0 5-27 5-27 0z" /><path fill="#d9d9d9" d="M4 5h8v21c-4-.5-8-1.500-8-3z" />
            <ellipse cx="14.5" cy="4" rx="13" ry="3" fill="#e2e2e2" stroke="#888" />
            <path d="M1 10.500c2 4 25 4 27 0M1 17c2 4 25 4 27 0M1 23.500c2 4 25 4 27 0" stroke="#77777a" />
          </Icon>
        </Task>
        <Task $open aria-label="OBS Studio">
          <Icon $w={26} viewBox="0 0 26 26">
            <circle cx="13" cy="13" r="12.5" fill="#17171b" />
            <g stroke="#c9c9cc" strokeWidth="1.4">
              {[0, 120, 240].map((a) => (
                <path key={a} transform={`rotate(${a} 13 13)`} d="M13 13C9 12 7.500 8 9 4" />
              ))}
            </g>
          </Icon>
        </Task>
        <Task $open aria-label="Visual Studio Code">
          <Icon $w={30} viewBox="0 0 30 30">
            <path fill="#1c7fc9" d="M22 1l-2 .5L1 18.500v2l2 2h2L22 9.500z" />
            <path fill="#1668ad" d="M22 29l-2-.5L1 11.500v-2l2-2h2l17 13z" />
            <path fill="#30a3ee" d="M21 0l8 3.500v23L21 30c-1 0-1.500-.5-1.500-1V1c0-.5.500-1 1.500-1z" />
          </Icon>
        </Task>
        <Task $open aria-label="Paint">
          <Icon $w={30} viewBox="0 0 30 30">
            <path fill="#d3e3ea" stroke="#91a8b2" d="M13 7c8-1 13 4 13 10s-4 10-11 10c-3 0-2-4-5-5s-7 2-8-1C0 14 5 8 13 7z" />
            <circle cx="7" cy="16" r="2" fill="#d8453a" /><circle cx="12" cy="12" r="2" fill="#e9b93a" /><circle cx="18" cy="12" r="2" fill="#5aa646" /><circle cx="14" cy="21" r="2.5" fill="#fff" />
            <path d="M26 5l-6 21" stroke="#c98a3b" strokeWidth="3" /><path d="M28 1l-2 5" stroke="#9a6b47" strokeWidth="3.5" />
          </Icon>
        </Task>
        <Task $open aria-label="Recortes">
          <Icon $w={30} viewBox="0 0 30 30">
            <ellipse cx="14" cy="8" rx="12" ry="7" fill="#f3e9ea" stroke="#c9606a" strokeWidth="1.5" transform="rotate(-15 14 8)" />
            <path d="M12 4l6 14M22 4l-5 14" stroke="#77777a" strokeWidth="1.5" />
            <ellipse cx="23" cy="20" rx="4.5" ry="2.8" stroke="#2f86b8" strokeWidth="2" transform="rotate(25 23 20)" />
            <ellipse cx="17" cy="24" rx="2.8" ry="4.5" stroke="#2f86b8" strokeWidth="2" transform="rotate(10 17 24)" />
          </Icon>
        </Task>

        <Tray>
          <Plain $w={162} aria-label="Contactos">
            <Icon viewBox="0 0 20 20" stroke="#222" strokeWidth="1.4">
              <circle cx="14" cy="4.5" r="3.3" /><circle cx="6.5" cy="10.5" r="3" /><path d="M1 19c.5-3 3-5 5.500-5s4 1.500 4.500 5M10.500 9.500c3-2.500 7.500-1.500 8.500 2" />
            </Icon>
          </Plain>
          <Plain $w={78} aria-label="Noticias">
            <Icon $w={30} $h={21} viewBox="0 0 30 21" stroke="#111" strokeWidth="2">
              <path d="M1 1h24v16a3 3 0 0 0 3 3H4a3 3 0 0 1-3-3zM25 5h4v12a3 3 0 0 1-3 3" /><path d="M5 5.500h16M15 9.500h6M15 12.500h6M15 15.500h6M5 9.500h6v6H5z" strokeWidth="1.6" />
            </Icon>
          </Plain>
          <Plain $w={32} aria-label="Iconos ocultos">
            <Icon $w={16} viewBox="0 0 16 16" stroke="#222" strokeWidth="1.4"><path d="M1 12l7-7 7 7" /></Icon>
          </Plain>
          <Plain $w={30} aria-label="Cámara">
            <Icon $w={18} viewBox="0 0 18 18" stroke="#222" strokeWidth="1.4"><rect x="3" y="5" width="9" height="8.5" rx="2" /><path d="M12 8.500l3-1.500v4.500l-3-1.500M4 1.500q4-1.500 8 0M4 17q4 1.500 8 0" /></Icon>
          </Plain>
          <Plain $w={30} aria-label="Batería">
            <Icon $w={19} viewBox="0 0 19 19" stroke="#111" strokeWidth="1.3">
              <path d="M1 5h16.500v9H1z" /><path d="M3 7h4v5H3z" fill="#111" /><circle cx="13.5" cy="13.5" r="5.5" fill="#14852a" stroke="none" /><path d="M13.500 10.500l2 3-2 3-2-3z" stroke="#d8f0dc" strokeWidth="1.2" />
            </Icon>
          </Plain>
          <Plain $w={30} aria-label="Volumen">
            <Icon viewBox="0 0 20 20" stroke="#222" strokeWidth="1.3"><path d="M1 7h3l4-4v14l-4-4H1zM11 8q1 2 0 4" /><path d="M14 6q2.500 4 0 8M17 4q3.500 6 0 12" stroke="#9a9a9d" /></Icon>
          </Plain>
          <Plain $w={44}>ESP</Plain>
          <Clock>17:08<br />19/04/2023</Clock>
          <Notice $w={60} aria-label="Notificaciones: 2">
            <Icon $w={21} viewBox="0 0 21 21"><path fill="#07070c" d="M0 0h21v16h-7v4l-4-4H0z" /><path d="M4 4.500h13M4 8h13M4 11.500h9" stroke="#d6d7da" strokeWidth="1.3" /></Icon>
            <Count>2</Count>
          </Notice>
          <DesktopEdge />
        </Tray>
      </Taskbar>
    </Window>
  );
}
